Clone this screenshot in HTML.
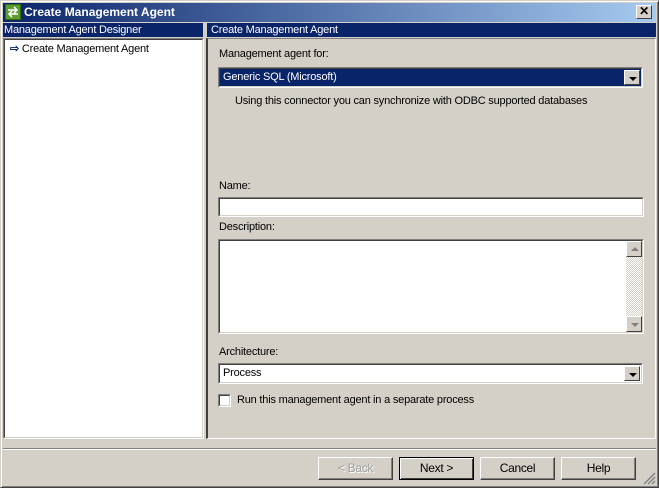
<!DOCTYPE html>
<html><head><style>
*{margin:0;padding:0;box-sizing:border-box}
body{width:659px;height:488px;background:#d4d0c8;font-family:"Liberation Sans",sans-serif;font-size:11px;letter-spacing:-0.2px;color:#000;position:relative;overflow:hidden}
.a{position:absolute}
.sunk{border-top:1px solid #808080;border-left:1px solid #808080;border-right:1px solid #fff;border-bottom:1px solid #fff}
.sunk2{border-top:1px solid #404040;border-left:1px solid #404040;border-right:1px solid #d4d0c8;border-bottom:1px solid #d4d0c8;background:#fff;width:100%;height:100%}
.btn{position:absolute;top:457px;height:23px;width:75px;background:#d4d0c8;border-top:1px solid #fff;border-left:1px solid #fff;border-right:1px solid #404040;border-bottom:1px solid #404040;box-shadow:inset -1px -1px 0 #808080;text-align:center;line-height:20px;font-size:12px;letter-spacing:-0.3px}
.dd{position:absolute;right:1px;top:1px;width:16px;bottom:1px;background:#d4d0c8;border-top:1px solid #fff;border-left:1px solid #fff;border-right:1px solid #404040;border-bottom:1px solid #404040}
.dd:after{content:"";position:absolute;left:4px;top:6px;border-left:4px solid transparent;border-right:4px solid transparent;border-top:4px solid #000}
.dd.g:after{border-top-color:#808080}
.dd.up:after{border-top:none;border-bottom:4px solid #808080;top:5px}
</style></head><body>
<div class="a" style="left:0;top:0;width:659px;height:488px;border:1px solid #d4d0c8;border-right-color:#404040;border-bottom-color:#404040;box-shadow:inset 1px 1px 0 #fff,inset -1px -1px 0 #808080"></div>
<div class="a" style="left:3px;top:3px;width:653px;height:19px;background:linear-gradient(to right,#0a246a,#a6caf0)"></div>
<div class="a" style="left:5px;top:4px;width:16px;height:16px;background:#5c9e2e;border:1px solid #2d6a10"><svg width="14" height="14" viewBox="0 0 14 14"><path d="M2 5h9M8 2l3 3-3 3M12 9H3M6 6L3 9l3 3" stroke="#fff" stroke-width="1.6" fill="none"/></svg></div>
<div class="a" style="left:24px;top:5px;color:#fff;font-weight:bold;font-size:12px;letter-spacing:0">Create Management Agent</div>
<div class="a" style="left:636px;top:5px;width:16px;height:14px;background:#d4d0c8;border-top:1px solid #fff;border-left:1px solid #fff;border-right:1px solid #404040;border-bottom:1px solid #404040;text-align:center;line-height:11px;font-size:12px;font-weight:bold">✕</div>
<div class="a" style="left:3px;top:23px;width:200px;height:14px;background:#0a246a;color:#fff;line-height:14px;padding-left:1px">Management Agent Designer</div>
<div class="a" style="left:207px;top:23px;width:449px;height:14px;background:#0a246a;color:#fff;line-height:14px;padding-left:4px">Create Management Agent</div>
<div class="a sunk" style="left:3px;top:38px;width:201px;height:401px"><div class="sunk2"></div></div>
<div class="a" style="left:10px;top:42px"><span style="color:#0a246a;font-weight:bold">⇨</span> Create Management Agent</div>
<div class="a" style="left:206px;top:38px;width:450px;height:401px;border-left:2px solid #404040;border-top:1px solid #808080;border-right:1px solid #fff;border-bottom:1px solid #fff"></div>
<div class="a" style="left:219px;top:48px">Management agent for:</div>
<div class="a sunk" style="left:218px;top:67px;width:425px;height:21px"><div class="sunk2" style="background:#0a246a;color:#fff;padding:2px 3px;position:relative">Generic SQL (Microsoft)<div class="dd"></div></div></div>
<div class="a" style="left:235px;top:95px">Using this connector you can synchronize with ODBC supported databases</div>
<div class="a" style="left:219px;top:180px">Name:</div>
<div class="a sunk" style="left:218px;top:197px;width:426px;height:20px"><div class="sunk2"></div></div>
<div class="a" style="left:219px;top:221px">Description:</div>
<div class="a sunk" style="left:218px;top:239px;width:426px;height:95px"><div class="sunk2" style="position:relative">
<div class="a" style="right:0;top:0;width:16px;bottom:0;background:repeating-conic-gradient(#fff 0 25%,#d4d0c8 0 50%) 0 0/2px 2px"></div>
<div class="dd up" style="right:0;top:0;bottom:auto;height:16px"></div>
<div class="dd g" style="right:0;top:auto;bottom:0;height:16px"></div>
</div></div>
<div class="a" style="left:219px;top:346px">Architecture:</div>
<div class="a sunk" style="left:218px;top:363px;width:425px;height:21px"><div class="sunk2" style="padding:2px 3px;position:relative">Process<div class="dd"></div></div></div>
<div class="a sunk" style="left:218px;top:394px;width:13px;height:13px"><div class="sunk2"></div></div>
<div class="a" style="left:237px;top:394px">Run this management agent in a separate process</div>
<div class="a" style="left:3px;top:448px;width:653px;height:2px;border-top:1px solid #808080;border-bottom:1px solid #fff"></div>
<div class="btn" style="left:318px;color:#a0a0a0;text-shadow:1px 1px 0 #fff">&lt; Back</div>
<div class="btn" style="left:399px;border:1px solid #000;box-shadow:inset 1px 1px 0 #fff,inset -1px -1px 0 #404040">Next &gt;</div>
<div class="btn" style="left:480px">Cancel</div>
<div class="btn" style="left:561px">Help</div>
<svg class="a" style="left:643px;top:472px" width="13" height="13"><path d="M12 1L1 12M12 5L5 12M12 9L9 12" stroke="#808080" stroke-width="1.3"/></svg>
</body></html>
